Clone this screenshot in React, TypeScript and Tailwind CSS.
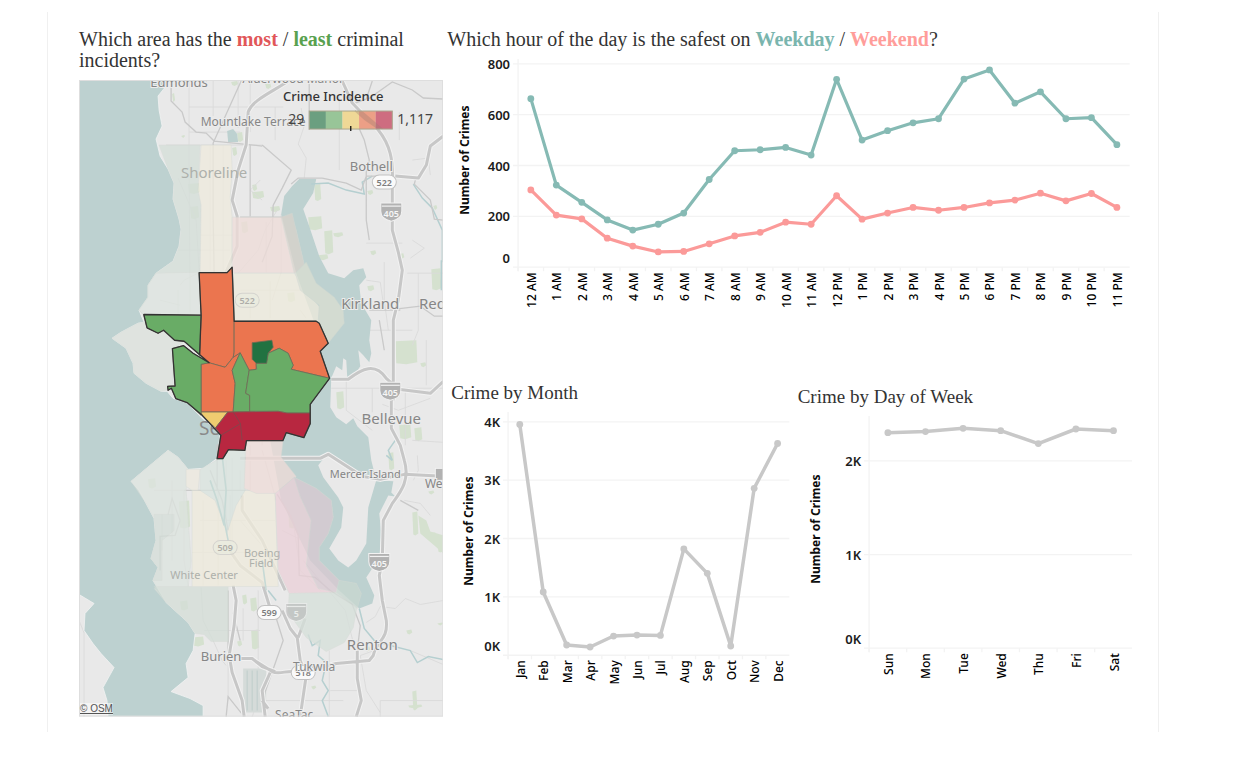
import React from "react";

type Series = { name: string; color: string; values: number[] };

type LineChartProps = {
  label: string;
  width: number;
  height: number;
  plot: { left: number; right: number; top: number; zero: number };
  unit: number;
  unitHeight: number;
  ticks: { value: number; text: string }[];
  tickRight: number;
  zeroLabelLift: number;
  axisTitle: { x: number; y: number };
  categories: string[];
  series: Series[];
  strokeWidth: number;
};

const HOURS = [
  "12 AM", "1 AM", "2 AM", "3 AM", "4 AM", "5 AM", "6 AM", "7 AM", "8 AM", "9 AM", "10 AM", "11 AM",
  "12 PM", "1 PM", "2 PM", "3 PM", "4 PM", "5 PM", "6 PM", "7 PM", "8 PM", "9 PM", "10 PM", "11 PM",
];
const MONTHS = ["Jan", "Feb", "Mar", "Apr", "May", "Jun", "Jul", "Aug", "Sep", "Oct", "Nov", "Dec"];
const DAYS = ["Sun", "Mon", "Tue", "Wed", "Thu", "Fri", "Sat"];

const HOURLY: Series[] = [
  {
    name: "Weekend",
    color: "#fb9a99",
    values: [304, 205, 190, 114, 83, 60, 62, 92, 123, 137, 177, 169, 281, 189, 213, 235, 224, 235, 253, 264, 291, 261, 290, 235],
  },
  {
    name: "Weekday",
    color: "#86bab4",
    values: [663, 323, 255, 186, 146, 169, 213, 345, 458, 462, 471, 441, 739, 500, 537, 568, 584, 740, 776, 645, 690, 584, 588, 482],
  },
];
const MONTHLY: Series[] = [
  { name: "Crimes", color: "#c8c8c8", values: [3954, 1084, 175, 141, 329, 346, 340, 1822, 1403, 158, 2861, 3628] },
];
const DAILY: Series[] = [{ name: "Crimes", color: "#c8c8c8", values: [2301, 2312, 2347, 2322, 2184, 2340, 2322] }];

function LineChart(props: LineChartProps) {
  const { plot, unit, unitHeight, categories } = props;
  const step = (plot.right - plot.left) / categories.length;
  const xAt = (i: number) => plot.left + step * (i + 0.5);
  const yAt = (v: number) => plot.zero - (v / unit) * unitHeight;

  return (
    <svg
      viewBox={`0 0 ${props.width} ${props.height}`}
      className="block h-auto w-full font-['Noto_Sans',sans-serif]"
      role="img"
      aria-label={props.label}
    >
      <g stroke="#f3f3f3" strokeWidth="1.3">
        {props.ticks.map((t) => (
          <line key={t.text} x1={plot.left - 5} x2={plot.right} y1={yAt(t.value)} y2={yAt(t.value)} />
        ))}
        <line x1={plot.left} x2={plot.left} y1={plot.top} y2={plot.zero + 4} />
        {categories.map((c, i) => (
          <line key={c} x1={plot.left + step * i} x2={plot.left + step * i} y1={plot.zero} y2={plot.zero + 4} />
        ))}
      </g>
      <g className="text-[13px] font-semibold" fill="#1c1c1c" textAnchor="end">
        {props.ticks.map((t) => (
          <text key={t.text} x={props.tickRight} y={yAt(t.value) + 5 - (t.value === 0 ? props.zeroLabelLift : 0)}>
            {t.text}
          </text>
        ))}
      </g>
      <text
        className="text-[12px] font-bold"
        fill="#0c0c0c"
        textAnchor="middle"
        transform={`translate(${props.axisTitle.x} ${props.axisTitle.y}) rotate(-90)`}
      >
        Number of Crimes
      </text>
      <g className="text-[12px] font-medium" fill="#000" textAnchor="end">
        {categories.map((c, i) => (
          <text key={c} transform={`translate(${xAt(i) + 5} ${plot.zero + 5}) rotate(-90)`}>
            {c}
          </text>
        ))}
      </g>
      {props.series.map((s) => (
        <g key={s.name}>
          <polyline
            points={s.values.map((v, i) => `${xAt(i)},${yAt(v)}`).join(" ")}
            fill="none"
            stroke={s.color}
            strokeWidth={props.strokeWidth}
            strokeLinejoin="round"
          />
          {s.values.map((v, i) => (
            <circle key={i} cx={xAt(i)} cy={yAt(v)} r="3.4" fill={s.color} />
          ))}
        </g>
      ))}
    </svg>
  );
}

const PARKS: [number, number, number, number][] = [
  [231, 81, 7, 5], [265, 83, 6, 6], [172, 93, 3, 9], [237, 132, 6, 10], [181, 135, 4, 3], [188, 183, 12, 11],
  [190, 206, 9, 13], [232, 147, 5, 9], [252, 191, 12, 8], [252, 184, 5, 7], [270, 206, 10, 6], [241, 221, 7, 12],
  [314, 184, 7, 17], [308, 216, 14, 14], [324, 230, 9, 24], [333, 232, 10, 5], [318, 254, 10, 6], [367, 190, 6, 5],
  [397, 253, 7, 6], [433, 205, 4, 5], [431, 268, 10, 22], [395, 340, 22, 24], [367, 285, 7, 6], [336, 391, 8, 18],
  [399, 424, 12, 15], [414, 427, 8, 14], [420, 362, 6, 5], [388, 452, 6, 18], [347, 520, 8, 6], [288, 508, 9, 20],
  [412, 511, 6, 24], [424, 532, 12, 6], [437, 536, 6, 16], [242, 594, 5, 10], [250, 597, 7, 14], [251, 629, 8, 20],
  [237, 640, 5, 6], [192, 636, 12, 10], [412, 690, 5, 20], [408, 704, 14, 4], [311, 685, 5, 4], [364, 646, 6, 5],
  [406, 629, 6, 5], [437, 622, 6, 3], [148, 478, 8, 10], [179, 500, 11, 28], [180, 600, 8, 10], [245, 342, 5, 6],
  [287, 292, 8, 10], [370, 250, 6, 5], [428, 490, 6, 4], [344, 452, 4, 6],
];

const MINOR_ROADS =
  "M189 81V165L190 312M238 81V128M213 81V116M189 107H283M189 132H240M250 81V132M275 107V140M339 96V170M301 108L304 126 298 144 306 158 304 178" +
  "M166 145H262M170 250H230M178 178L196 220 199 270M201 235H232M210 145V270M223 145V270M366 243H402M412 240L424 248 410 258M399 112V140M412 160L428 158 430 175" +
  "M384 262V300L388 330M407 273H443M418 273V330L412 345M360 330H412M366 280L380 282 384 310M331 388H443M346 378V410L372 430M372 388V412M405 388V445" +
  "M382 404L398 410 430 398M426 340V385M412 440L443 442M417 455L418 470 413 480M172 480V560M154 490H184M162 514V550M184 490V560L188 586" +
  "M203 500V585M218 490V585M230 495V550M200 520H275M192 552H255M240 520L275 560M290 500L300 570 320 590M282 530L312 545M201 587L203 620 213 640 222 660 226 665" +
  "M204 630H260M228 640V700M243 608V640M258 590V700L252 716M303 560L345 610 355 650M260 700H343M329 650V716M330 690H360M374 650L360 655 366 690 380 712" +
  "M380 716V700H443M410 650L443 664M443 600L420 604 405 598 395 608 380 606M366 622L375 616 380 606M404 500L420 503 430 515M84 630L84 716M79 620L84 632" +
  "M238 273L258 250 265 230 277 210M266 222V272M240 290H300M250 300V318M270 281V318M300 310L306 318M180 285L184 280 200 272M178 290V315M160 300L180 305" +
  "M262 320V445M250 445V490M262 450L276 500M240 470V490M226 460V520M232 458V540M210 490H250M260 180L250 190 262 200M281 214V272L272 300";

const THIN_ROADS =
  "M171 81V101L182 112 185 122 196 132 206 133 214 141 262 146M241 81L213 143V216L214 272M262 145L291 170 282 188 273 205 272 236 262 262" +
  "M291 184L298 178 322 178 346 183 361 190 366 176 394 176M309 81V130M372 81L366 99 355 103 356 122 364 140 369 160 366 172 366 220 369 240" +
  "M368 99L392 82 412 90 423 98 443 99M250 145V216M416 176L414 184 430 200 434 219 443 220M240 217H292M369 310H400M395 309L420 306 434 316 443 316" +
  "M443 81V140M168 514L172 498 180 520 175 535 160 536 160 570M277 494L290 515 298 535 299 575 315 577 330 590 352 604 360 625 357 650M273 608L283 640 262 700" +
  "M228 590V660M226 716L228 696 244 716M217 444V490M184 490H245M233 612L240 640M400 500L418 510M379 320L384 350M210 470L222 500 228 530";

const HIGHWAYS =
  "M288 81C272 92 252 100 248 112L246 145 238 170 232 200 237 216V246L226 272" +
  "M342 81L352 103 378 130C390 145 393 160 392 182V230L398 252 402 270 398 300 393 320V400M391 400V428L400 445 404 460C410 480 400 492 392 503L383 520 382 560 379 575 382 600 386 620C388 640 376 640 373 655L369 660 336 663 300 672C288 668 280 675 272 671L256 661M395 176L418 178 426 165 430 146 443 136" +
  "M331 379H348C362 368 375 362 386 378L398 389 430 393 443 381" +
  "M240 458H320L328 454 362 476 380 479 404 474 443 476" +
  "M242 495V510L262 540 285 590M228 548L240 565 262 582 270 608M282 610L290 628 297 637 300 660 306 675 300 716M305 618L298 637" +
  "M233 585L236 600 234 625 229 655 232 672 242 700 244 716M241 658H252L262 666 275 671M357 650V678L361 700 356 716M265 716L262 690 270 672M268 708L262 700";

const CREEKS =
  "M311 184L328 183 346 190 364 194 362 182 372 176M413 184L422 198 432 208 442 230V262M359 608L364 628 374 640 390 645 410 650 417 662 428 656 443 659" +
  "M308 634L312 645 320 640 318 655 326 662 322 680 328 690 322 700 328 716M395 440L388 450 392 460 386 455M441 260V290M268 590L276 600";

const WATER_WEST =
  "M79 80H170L166 86 158 96 159 110 162 126 156 139 160 156 168 169 174 183 173 199 179 219 181 229 179 246 173 261 156 273 148 285 148 297 139 310 144 322 138 323 121 332 112 338 126 348 133 363 134 373 146 383 161 391 167 391 173 398 188 403 201 417 214 428 220 433 217 458 209 464 203 468 188 469 178 457 168 450 156 460 131 481 139 490 146 503 154 518 156 540 151 558 158 567 153 580 166 602 188 622 195 633 193 650 186 663 188 677 171 691 190 698 203 705 203 716H108L107 700 103 687 114 667 101 653 93 643 84 630 85 613 94 603 79 594Z";

const WATER_LAKE =
  "M299 179H316L313 193 303 209 309 226 319 256 328 273 344 278 353 270 363 268 366 277 359 285 361 303 371 320 369 340 371 353 369 362 363 355 358 350 360 366 354 375 347 377 346 360 343 358 342 370 336 366 331 378 330 407 336 417 346 424 353 418 357 426 368 437 371 460 376 480 393 481 391 492 395 496 388 495 379 513 381 533 379 557 366 577 374 595 372 603 359 608 339 590 310 560 281 500 270 440 310 400 317 330 296 273 281 214 284 196 292 186Z";

const MERCER =
  "M318 465L326 455 338 459 350 470 366 477 376 480 373 490 368 507 366 543 356 560 348 567 338 560 329 548 341 527 343 507 338 497 323 477Z";

type Region = { d: string; fill: string };

const FADED: Region[] = [
  { d: "M159 145H200L198 190 201 205 200 272 201 315H144L139 310 148 297 148 285 156 273 173 261 179 246 181 229 179 219 173 199 174 183 168 169Z", fill: "#d5dfd9" },
  { d: "M200 272V315H144L139 310 148 297 148 285 156 273Z", fill: "#dee5e0" },
  { d: "M144 322L138 323 121 332 112 338 126 348 133 363 134 373 146 383 161 391 173 388V348L184 342 164 330 158 333Z", fill: "#dce2dc" },
  { d: "M201 145H231L232 170 230 197 232 217V272H200L201 205 198 190Z", fill: "#efebde" },
  { d: "M232 217H291L296 230 303 260 306 273H232Z", fill: "#efddd9" },
  { d: "M292 213L303 260 306 273H294L281 217Z", fill: "#d9d3cc" },
  { d: "M233 273H294L306 290 322 310 319 322H234Z", fill: "#eeebdc" },
  { d: "M295 273L306 262 316 283 334 297 343 310 344 323 328 343 318 321 319 305 300 290Z", fill: "#dadfd2" },
  { d: "M168 450L178 457 188 469 186 490 191 560 188 588H154L166 602 153 580 158 567 151 558 156 540 154 518 146 503 131 481 156 460Z", fill: "#dde4df" },
  { d: "M154 514H174V530L162 540V580L153 580 158 567 151 558 156 540Z", fill: "#d4ded8" },
  { d: "M154 586L228 586V641H211L204 634 195 633 188 622 166 602Z", fill: "#d4ded7" },
  { d: "M186 469H200L198 490 192 490 186 486Z", fill: "#eeeadf" },
  { d: "M192 490H275V493L278 586H192Z", fill: "#efebdc" },
  { d: "M200 469L218 459 228 449 245 450 245 490 236 505 227 532 215 500 200 490Z", fill: "#dae4df" },
  { d: "M246 440H283L281 457 296 476 288 493H256L244 488Z", fill: "#efdcd8" },
  { d: "M275 493L294 477 316 488 331 500 333 517 328 533 319 547V560L339 580 336 592 289 593 278 570Z", fill: "#ebd1d8" },
  { d: "M294 477L316 488 331 500 333 517 328 533 319 547V560L339 580 336 592 318 588 306 565 311 520 300 496Z", fill: "#d9cad2" },
  { d: "M289 593L336 592 339 580 356 583 361 593 356 610 353 627 344 642 326 651 306 637 288 612Z", fill: "#d6e0da" },
  { d: "M336 592L339 580 356 583 361 593 357 608Z", fill: "#c9d8d1" },
];

const ORANGE = "#eb754f";
const GREEN = "#69ac66";
const CRIMSON = "#b82740";

const SELECTED: Region[] = [
  { fill: ORANGE, d: "M199 272.5H227L232 267 234 321V352L233 357 225 367 209 362.5 199.5 355 201 315Z" },
  { fill: ORANGE, d: "M201 364L209 362.5 225 367 233 357 240 352.5 232 370 235 383 233 411.7H201Z" },
  { fill: ORANGE, d: "M234 321H316L319 323 328 343 320 351 329.3 378 291 369 293 365 288 353 279 348 268 353 256 363V369L249 370 240 352.5 233 357 234 352Z" },
  { fill: GREEN, d: "M240 352.5L249 370 245.5 393 249.5 395V411.7H233L235 383 232 370Z" },
  { fill: GREEN, d: "M249 370L256.5 369 256 363H266L268 353 279 348 288 353 293 365 291 369 329.3 378 310 404V412.7H287L278 411H249.5V395L245.5 393Z" },
  { fill: "#217241", d: "M252 342.5L271.7 340 273 347 268 353 266.5 363H256L252 359Z" },
  { fill: GREEN, d: "M143.7 314.3L201 315 199.5 355 184 341 174.5 340 163.5 330 158 333 147 327.7Z" },
  { fill: GREEN, d: "M172.3 348.3L183.3 345.3 193 353 209 362.5 201 364V415L187 402.3 175.7 398.3 171.3 388 168 390 167.5 386 175 385.7Z" },
  { fill: "#efcc70", d: "M201 411.7H227.7L215.3 427.7 202 415Z" },
  { fill: CRIMSON, d: "M227.7 411.7L278 411 287 412.7H310V423.3L303.7 437.3 286 432.3 282.7 440.3H246.3L244.7 450 228.3 449.3 222.7 458.3H217L220.7 435 215.3 427.7Z" },
];

const SELECTION_OUTLINE =
  "M199.5 355L201 315 199 272.5H227L232 267 234 321H316L319 323 328 343 320 351 329.3 378 310 404V423.3L303.7 437.3 286 432.3 282.7 440.3H246.3L244.7 450 228.3 449.3 222.7 458.3H217L220.7 435 202 415 187 402.3 175.7 398.3 171.3 388 168 390 167.5 386 175 385.7 172.3 348.3 183.3 345.3 193 353 209 362.5 184 341 174.5 340 163.5 330 158 333 147 327.7 143.7 314.3 201 315";

type Place = { text: string; x: number; y: number; size: "xs" | "sm" | "md" | "lg"; faded?: boolean };

const PLACES: Place[] = [
  { text: "Edmonds", x: 179, y: 87, size: "md" },
  { text: "Alderwood Manor", x: 293, y: 83, size: "sm" },
  { text: "Mountlake Terrace", x: 253, y: 126, size: "sm" },
  { text: "Shoreline", x: 214, y: 178, size: "lg", faded: true },
  { text: "Bothell", x: 371, y: 171, size: "md" },
  { text: "Kirkland", x: 370, y: 309, size: "lg" },
  { text: "Redmond", x: 453, y: 309, size: "lg" },
  { text: "Bellevue", x: 391, y: 424, size: "lg" },
  { text: "Mercer Island", x: 365, y: 478, size: "xs" },
  { text: "Westlake", x: 450, y: 488, size: "sm" },
  { text: "Boeing", x: 262, y: 557, size: "xs", faded: true },
  { text: "Field", x: 261, y: 567, size: "xs", faded: true },
  { text: "White Center", x: 204, y: 579, size: "xs", faded: true },
  { text: "Renton", x: 372, y: 649, size: "lg" },
  { text: "Burien", x: 221, y: 660, size: "md" },
  { text: "Tukwila", x: 314, y: 670, size: "sm" },
  { text: "SeaTac", x: 294, y: 718, size: "sm" },
];

const PLACE_SIZE = { xs: "text-[11px]", sm: "text-[12px]", md: "text-[13px]", lg: "text-[15px]" };

function Oval({ x, y, text, faded }: { x: number; y: number; text: string; faded?: boolean }) {
  return (
    <g opacity={faded ? 0.55 : 1}>
      <rect x={x - 12} y={y - 7} width="24" height="14" rx="7" fill={faded ? "#e9ecdf" : "#fafafa"} stroke="#c2c2c2" strokeWidth="1" />
      <text x={x} y={y + 3.5} textAnchor="middle" className="text-[9px] font-semibold" fill="#7d7d7d">
        {text}
      </text>
    </g>
  );
}

function Shield({ x, y, text, faded }: { x: number; y: number; text: string; faded?: boolean }) {
  return (
    <g transform={`translate(${x} ${y})`} opacity={faded ? 0.55 : 1}>
      <path d="M-10.5 -9H10.5V-1C10.5 5 6 8 0 9C-6 8 -10.5 5 -10.5 -1Z" fill="#b2b2b2" stroke="#f2f2f2" strokeWidth="1" />
      <path d="M-9.5 -6H9.5" stroke="#f2f2f2" strokeWidth="1.2" />
      <text x="0" y="4.5" textAnchor="middle" className="text-[9px] font-semibold" fill="#f6f6f6">
        {text}
      </text>
    </g>
  );
}

const LEGEND_COLORS = ["#6b9f80", "#98c598", "#efd896", "#ec9f86", "#ce6d80"];

function CrimeMap() {
  return (
    <div className="relative">
      <svg
        viewBox="79 80 364 636"
        className="block h-auto w-full font-['Noto_Sans',sans-serif]"
        role="img"
        aria-label="Map of crime incidence by area"
      >
        <rect x="79" y="80" width="364" height="636" fill="#e9e9e9" />
        {PARKS.map(([x, y, w, h]) => (
          <path key={`${x}-${y}`} d={`M${x} ${y + 1}l${w - 1} -1l1 ${h - 2}l${-w / 2} 2l${1 - w / 2} -1z`} fill="#d5e1cf" />
        ))}
        <path d="M418 515L426 520 430 531 443 535 443 553 434 545 420 533Z" fill="#d5e1cf" />
        <path d={MINOR_ROADS} fill="none" stroke="#dadada" strokeWidth="0.9" />
        <path d={WATER_WEST} fill="#bdd1d0" stroke="#f1f2f2" strokeWidth="0.8" />
        <path d={WATER_LAKE} fill="#bdd1d0" />
        <path d="M227 131L233 129 237 134 238 142H228Z" fill="#bdd1d0" />
        <path d={MERCER} fill="#e9e9e9" />
        <path d="M243 668H266V712H243Z" fill="#d5dbd9" />
        <path d="M247 670V710M252 670V710M257 670V710" stroke="#bfcdcb" strokeWidth="1" />
        <path d={CREEKS} fill="none" stroke="#b5cfd0" strokeWidth="1.5" />
        <path d={THIN_ROADS} fill="none" stroke="#c9c9c9" strokeWidth="1.3" />
        <path d={HIGHWAYS} fill="none" stroke="#f2f2f2" strokeWidth="5" strokeLinejoin="round" />
        <path d={HIGHWAYS} fill="none" stroke="#c7c7c7" strokeWidth="3" strokeLinejoin="round" />
        <g opacity="0.76">
          {FADED.map((r) => (
            <path key={r.d} d={r.d} fill={r.fill} stroke="#d3d8d2" strokeWidth="0.5" />
          ))}
        </g>
        <path d="M222 455L226 490 224 520 228 540M210 480L217 500 224 525M262 560L266 590" fill="none" stroke="#c6d9d5" strokeWidth="1.6" />

        <Oval x={247} y={300} text="522" faded />
        <Oval x={225} y={547} text="509" faded />
        <Oval x={384} y={182} text="522" />
        <Oval x={269} y={612} text="599" />
        <Oval x={303} y={672} text="518" />
        <Shield x={391} y={212} text="405" />
        <Shield x={390} y={391} text="405" />
        <Shield x={379} y={562} text="405" />
        <Shield x={296} y={612} text="5" faded />
        <rect x="435" y="468" width="10" height="12" fill="#b2b2b2" stroke="#f2f2f2" />

        <text x="199" y="435" className="text-[19px]" fill="#8a8a8a">
          Seattle
        </text>
        {PLACES.map((p) => (
          <text
            key={p.text}
            x={p.x}
            y={p.y}
            textAnchor="middle"
            className={PLACE_SIZE[p.size]}
            fill={p.faded ? "#adb0ab" : "#868686"}
            stroke={p.faded ? "none" : "#ececec"}
            strokeWidth="2"
            paintOrder="stroke"
          >
            {p.text}
          </text>
        ))}

        {SELECTED.map((r) => (
          <path key={r.d} d={r.d} fill={r.fill} stroke="#6f6a55" strokeWidth="0.8" strokeLinejoin="round" />
        ))}
        <path d="M233.3 412L240.3 423.3 242 440M220.7 435L240.3 423.3" fill="none" stroke="#7a4a4e" strokeWidth="0.8" />
        <path d={SELECTION_OUTLINE} fill="none" stroke="#333" strokeWidth="1.3" strokeLinejoin="round" />

        <g>
          <text x="333" y="101" textAnchor="middle" className="text-[13px] font-medium" fill="#333">
            Crime Incidence
          </text>
          {LEGEND_COLORS.map((c, i) => (
            <rect key={c} x={309 + i * 16.6} y="111" width="16.7" height="18" fill={c} />
          ))}
          <path d="M354 111L364 120 377 129H383L362 111Z" fill="#9a7a70" opacity="0.35" />
          <rect x="309" y="111" width="83" height="18" fill="none" stroke="#aaa68d" strokeWidth="1" />
          <path d="M350.5 126V131" stroke="#111" strokeWidth="1.3" />
          <text x="304" y="124" textAnchor="end" className="text-[14px]" fill="#444">
            29
          </text>
          <text x="397" y="124" className="text-[14px]" fill="#444">
            1,117
          </text>
        </g>
        <rect x="79.5" y="80.5" width="363" height="635" fill="none" stroke="#dedede" />
      </svg>
      <a
        href="https://www.openstreetmap.org/copyright"
        className="absolute bottom-0.5 left-px bg-white/50 font-['Liberation_Sans',sans-serif] text-[10px] leading-3 text-[#555] underline"
      >
        © OSM
      </a>
    </div>
  );
}

const questionClass = "font-['Liberation_Serif',serif] text-[20px] leading-[21px] font-normal text-[#333]";
const titleClass = "font-['Liberation_Serif',serif] text-[19px] leading-[21px] font-normal text-[#333]";

export default function App() {
  return (
    <div className="min-h-screen bg-white pt-3 pb-8 pl-[47px] pr-[79px]">
      <main className="grid grid-cols-[364fr_684fr] gap-x-1 border-x border-[#f0f0f0] pt-[17px] pr-[26px] pb-[15px] pl-[31px]">
        <section className="flex flex-col gap-[9px]">
          <h2 className={questionClass}>
            Which area has the <strong className="text-[#e15759]">most</strong> /{" "}
            <strong className="text-[#59a14f]">least</strong> criminal incidents?
          </h2>
          <CrimeMap />
        </section>

        <div className="flex flex-col">
          <section>
            <h2 className={questionClass}>
              Which hour of the day is the safest on <strong className="text-[#7ab5ae]">Weekday</strong> /{" "}
              <strong className="text-[#ff9d9a]">Weekend</strong>?
            </h2>
            <LineChart
              label="Number of crimes by hour, weekday and weekend"
              width={684}
              height={270}
              plot={{ left: 71, right: 682, top: 9, zero: 217 }}
              unit={200}
              unitHeight={50.8}
              ticks={[800, 600, 400, 200, 0].map((v) => ({ value: v, text: String(v) }))}
              tickRight={63}
              zeroLabelLift={9}
              axisTitle={{ x: 22, y: 110 }}
              categories={HOURS}
              series={HOURLY}
              strokeWidth={3.2}
            />
          </section>

          <div className="mt-[62px] grid grid-cols-[350fr_334fr] items-start">
            <section>
              <h2 className={`${titleClass} pl-1`}>Crime by Month</h2>
              <LineChart
                label="Number of crimes by month"
                width={350}
                height={290}
                plot={{ left: 61, right: 342, top: 9, zero: 252 }}
                unit={1000}
                unitHeight={58.3}
                ticks={[4, 3, 2, 1, 0].map((v) => ({ value: v * 1000, text: `${v}K` }))}
                tickRight={53}
                zeroLabelLift={9}
                axisTitle={{ x: 26, y: 128 }}
                categories={MONTHS}
                series={MONTHLY}
                strokeWidth={3.5}
              />
            </section>
            <section className="pt-1">
              <h2 className={titleClass}>Crime by Day of Week</h2>
              <LineChart
                label="Number of crimes by day of week"
                width={334}
                height={290}
                plot={{ left: 71, right: 334, top: 9, zero: 241 }}
                unit={1000}
                unitHeight={93.6}
                ticks={[2, 1, 0].map((v) => ({ value: v * 1000, text: `${v}K` }))}
                tickRight={63}
                zeroLabelLift={9}
                axisTitle={{ x: 22, y: 122 }}
                categories={DAYS}
                series={DAILY}
                strokeWidth={3.5}
              />
            </section>
          </div>
        </div>
      </main>
    </div>
  );
}
